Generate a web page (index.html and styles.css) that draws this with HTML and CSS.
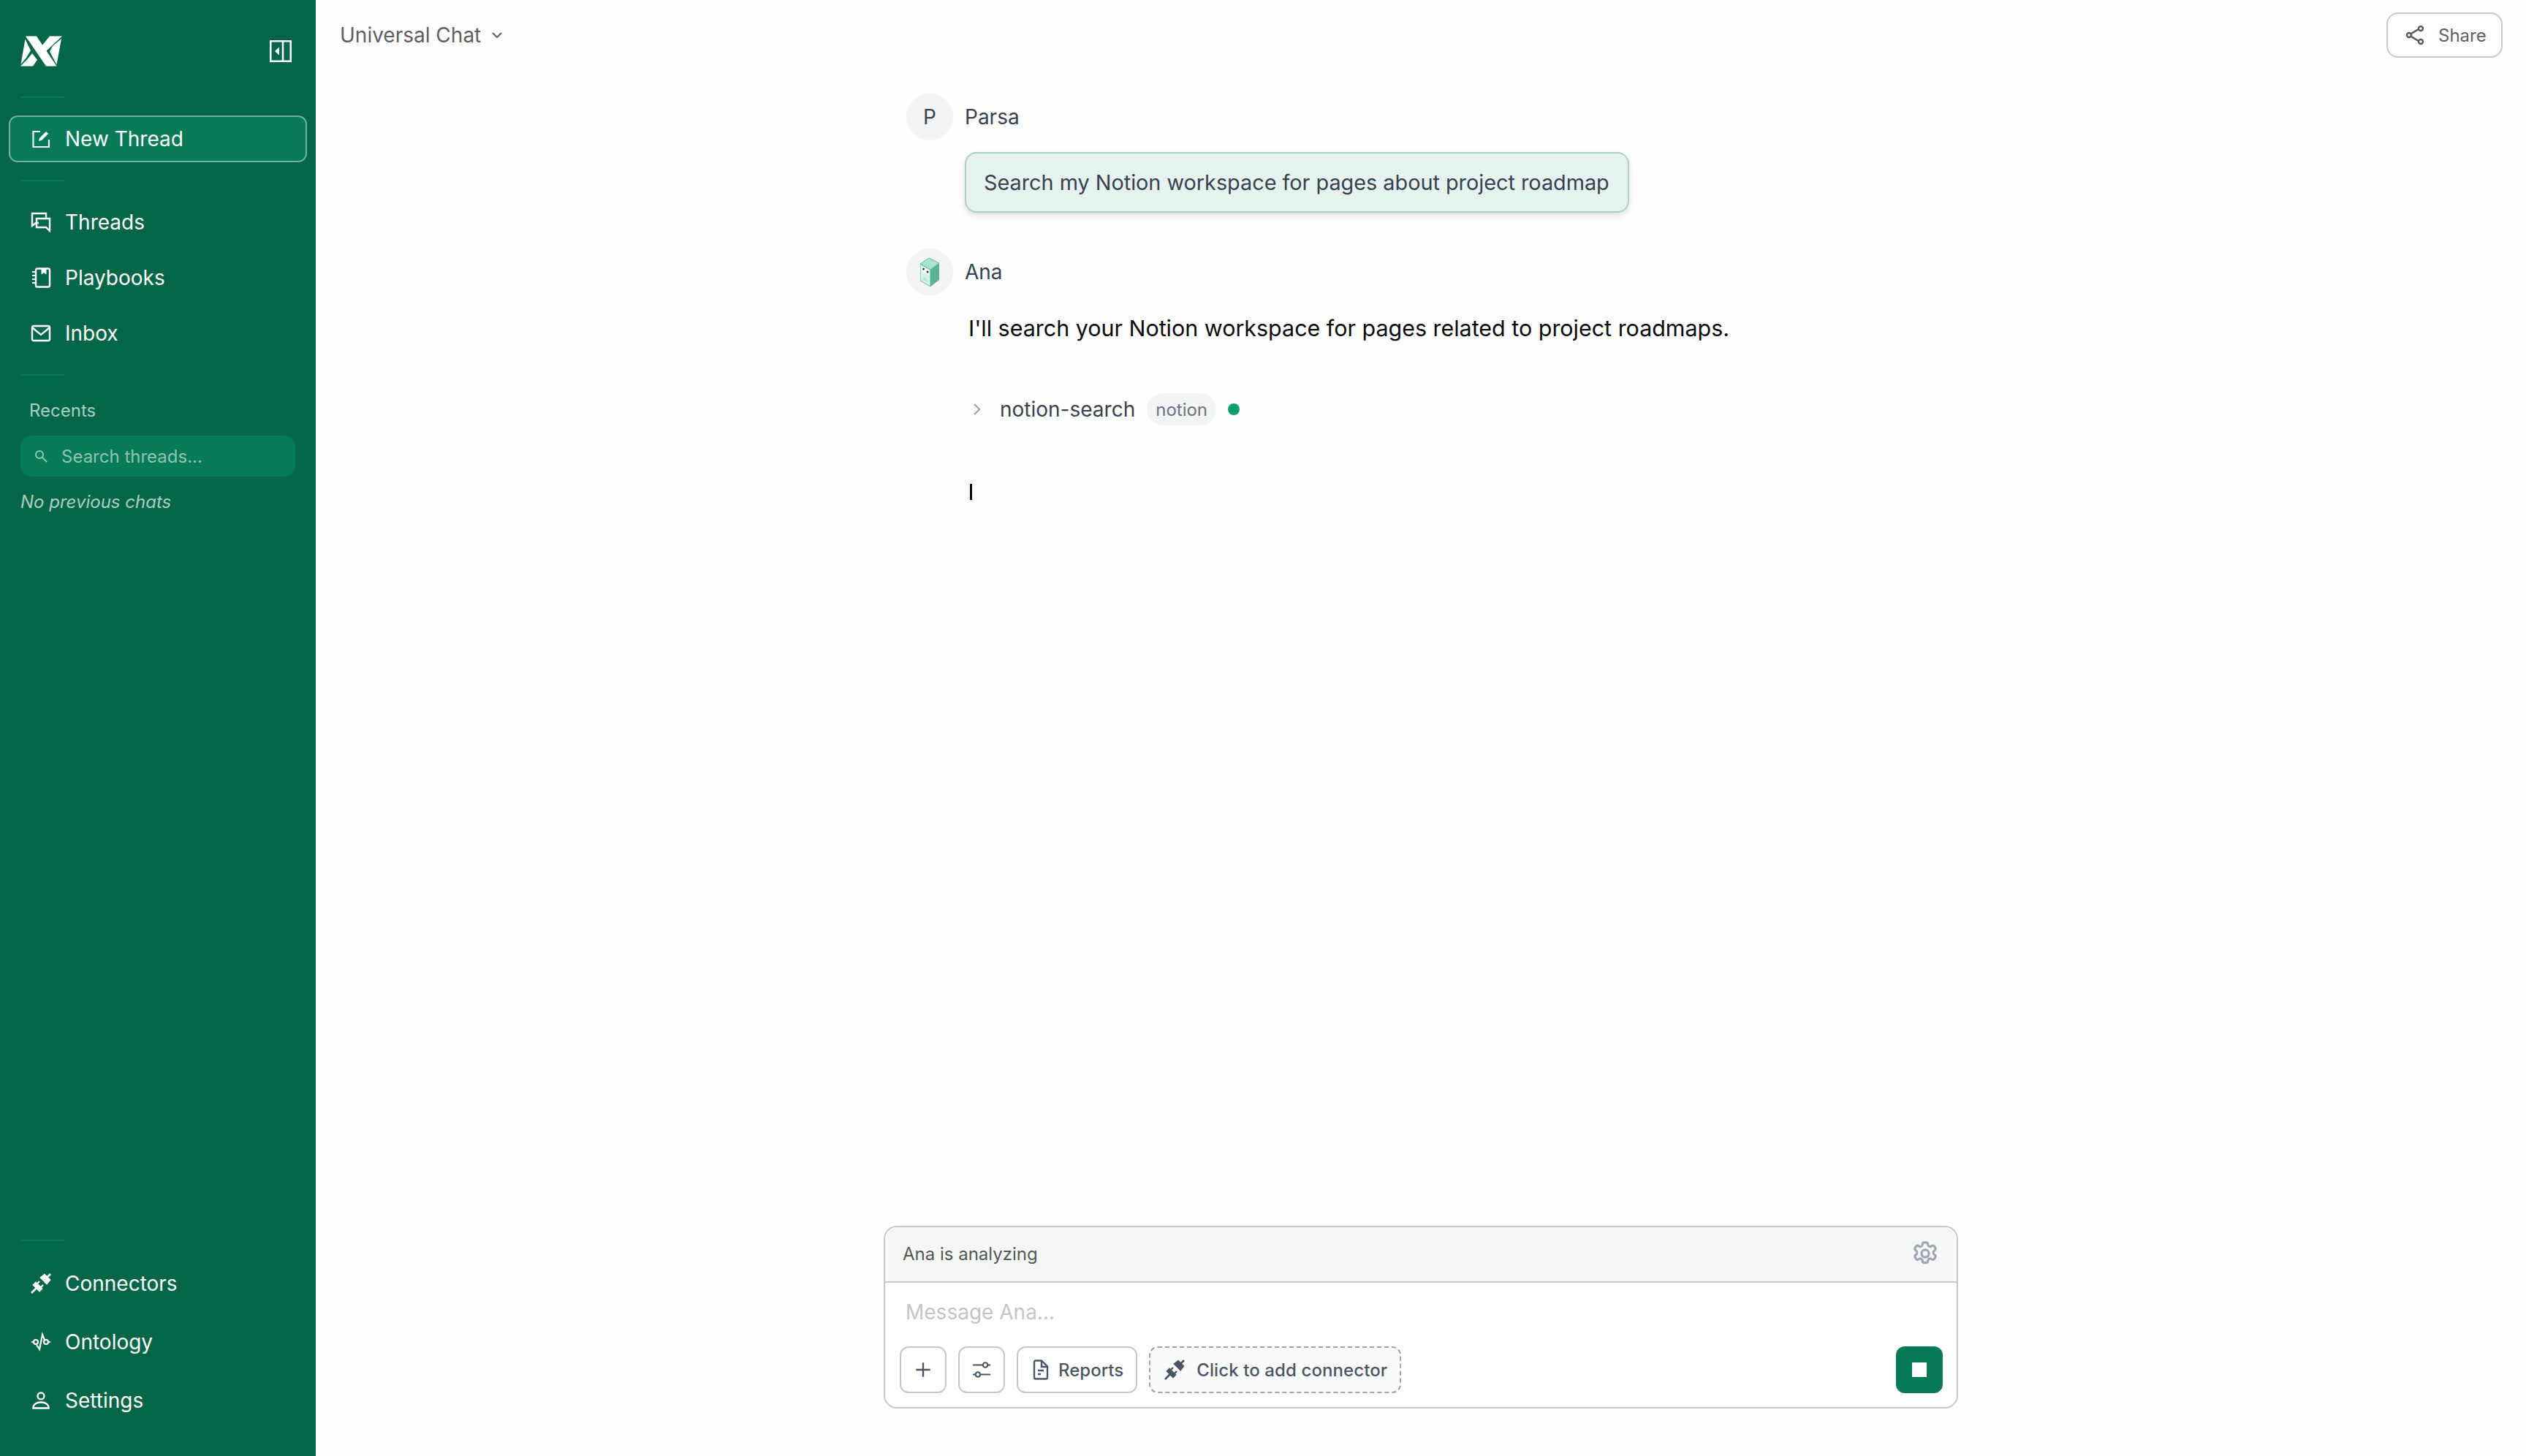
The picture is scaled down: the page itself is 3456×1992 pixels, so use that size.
FILE: index.html
```html
<!DOCTYPE html>
<html lang="en">

<head>
  <meta charset="utf-8">
  <title>Universal Chat</title>
  <link rel="stylesheet" href="styles.css">
</head>

<body>
  <aside class="sidebar">
    <div class="brand">
      <svg class="logo" viewBox="28 49 58 42" fill="#fff">
        <polygon points="35,49.500 50,49.500 77.500,90.500 63,90.500" />
        <polygon points="34.500,53.500 42,69 36,79 28.500,88" />
        <polygon points="28,90.500 37,81.500 44,73 51,82 45,90.500" />
        <polygon points="57,63 68,49.500 85,49.500 62,71" />
        <polygon points="84,53 77.500,88.500 68,70.500 72,63" />
      </svg>
      <svg class="toggle" viewBox="0 0 30 30" fill="none" stroke="#fff" stroke-width="2.500">
        <rect x="1.250" y="1.250" width="27.500" height="27.500" />
        <path d="M18 1v28" />
        <path d="M13 9.500v11l-6-5.500z" fill="#fff" stroke="none" />
      </svg>
    </div>
    <div class="rule"></div>
    <a class="new-thread">
      <svg class="icon" viewBox="0 0 24 24" fill="none" stroke="#fff" stroke-width="2.200">
        <path d="M11 2H1.500v21H23v-10" />
        <path d="M9 15l1-4 9-9 3 3-9 9z" fill="#fff" stroke="none" />
      </svg>
      New Thread
    </a>
    <div class="rule"></div>
    <nav class="nav nav-top">
      <a class="nav-row">
        <svg class="icon" viewBox="0 0 28 28" fill="none" stroke="#fff" stroke-width="2.400">
          <path d="M21 8V2H2v17l5-4h4" />
          <path d="M8 9h18v17l-5-5H8z" />
        </svg>
        Threads
      </a>
      <a class="nav-row">
        <svg class="icon" viewBox="0 0 28 28" fill="none" stroke="#fff" stroke-width="2.400">
          <rect x="7" y="1.500" width="19" height="25" rx="2" />
          <path d="M15 2v7l3-2.500 3 2.500V2" fill="#fff" stroke-width="1" />
          <path d="M2 6h5M2 11h5M2 16h5M2 21h5" stroke-width="2" />
        </svg>
        Playbooks
      </a>
      <a class="nav-row">
        <svg class="icon" viewBox="0 0 28 28" fill="none" stroke="#fff" stroke-width="2.400">
          <rect x="2" y="4" width="24" height="20" rx="2" />
          <path d="M2 6l12 10L26 6" />
        </svg>
        Inbox
      </a>
    </nav>
    <div class="rule"></div>
    <div class="recents">Recents</div>
    <div class="search">
      <svg class="search-icon" viewBox="0 0 18 18" fill="none" stroke="#8fc4b1" stroke-width="2">
        <circle cx="7" cy="7" r="5" />
        <path d="M11 11l6 6" />
      </svg>
      Search threads...
    </div>
    <div class="no-chats">No previous chats</div>
    <div class="rule rule-bottom"></div>
    <nav class="nav nav-bottom">
      <a class="nav-row">
        <svg class="icon" viewBox="0 0 28 28" fill="#fff" stroke="#fff" stroke-width="2.400">
          <path d="M1 27l7-7M27 1l-6 6" fill="none" stroke-width="2.800" />
          <path d="M4 16l8 8 3-3-8-8zM14 6l8 8 4-5-7-7z" />
          <path d="M12 11l-3 3M17 16l-3 3" />
        </svg>
        Connectors
      </a>
      <a class="nav-row">
        <svg class="icon" viewBox="0 0 28 28" fill="none" stroke="#fff" stroke-width="2.200">
          <circle cx="7" cy="14" r="3" />
          <circle cx="21" cy="14" r="3" />
          <path d="M1 14h3M24 14h3M8 18l4 6 4-20 3 7" />
        </svg>
        Ontology
      </a>
      <a class="nav-row">
        <svg class="icon" viewBox="0 0 28 28" fill="none" stroke="#fff" stroke-width="2.400">
          <circle cx="14" cy="8" r="4.500" />
          <path d="M3.500 24.500c0-5 4-8 10.500-8s10.500 3 10.500 8z" />
        </svg>
        Settings
      </a>
    </nav>
  </aside>

  <main class="main">
    <header class="topbar">
      <div class="title">
        Universal Chat
        <svg class="title-chevron" viewBox="0 0 16 10" fill="none" stroke="#5f5f5f" stroke-width="2">
          <path d="M2 2l6 6 6-6" />
        </svg>
      </div>
      <button class="share">
        <svg class="share-icon" viewBox="0 0 26 26" fill="none" stroke="#5a5a5a" stroke-width="2.400">
          <circle cx="5" cy="13" r="3" />
          <circle cx="21" cy="4" r="3" />
          <circle cx="21" cy="22" r="3" />
          <path d="M8 11l10-6M8 15l10 6" />
        </svg>
        Share
      </button>
    </header>

    <section class="thread">
      <div class="msg-head">
        <div class="avatar">P</div>
        <span>Parsa</span>
      </div>
      <div class="bubble">Search my Notion workspace for pages about project roadmap</div>

      <div class="msg-head msg-head-ana">
        <div class="avatar">
          <svg class="ana-box" viewBox="0 0 26 40">
            <polygon points="0,9 12,1 26,8 14,17" fill="#a9e3d0" stroke="#5fbd9f" />
            <polygon points="0,9 14,17 14,40 0,32" fill="#d5f2e8" stroke="#5fbd9f" />
            <polygon points="14,17 26,8 26,31 14,40" fill="#57b394" />
            <polygon points="2,12 12,18 12,25 2,19" fill="#fff" />
            <circle cx="4.500" cy="16" r="1.500" fill="#333" />
            <circle cx="10" cy="20" r="1.500" fill="#333" />
            <path d="M4 27l6 3v4l-6-3z" fill="#b5e6d6" />
          </svg>
        </div>
        <span>Ana</span>
      </div>
      <p class="reply">I'll search your Notion workspace for pages related to project roadmaps.</p>

      <div class="tool">
        <svg class="tool-chevron" viewBox="0 0 12 18" fill="none" stroke="#9ca3af" stroke-width="2.200">
          <path d="M2 2l7 7-7 7" />
        </svg>
        <span class="tool-name">notion-search</span>
        <span class="tool-tag">notion</span>
        <span class="tool-dot"></span>
      </div>
      <div class="cursor"></div>
    </section>

    <section class="composer">
      <div class="composer-head">
        <span>Ana is analyzing</span>
        <svg class="gear" viewBox="0 0 24 24" fill="none" stroke="#a0a5b1" stroke-width="2">
          <path d="M9.600 3.900c.1-.9.900-1.500 1.800-1.500h1.200c.9 0 1.700.6 1.800 1.500l.1.800c.1.500.5 1 1 1.200.5.200 1.100.2 1.500-.1l.7-.4c.8-.5 1.800-.3 2.300.5l.6 1c.5.8.3 1.800-.4 2.400l-.6.5c-.4.300-.6.900-.6 1.400s.2 1.100.6 1.400l.6.500c.7.600.9 1.600.4 2.400l-.6 1c-.5.800-1.500 1-2.300.5l-.7-.4c-.4-.3-1-.3-1.500-.1-.5.200-.9.700-1 1.200l-.1.800c-.1.900-.9 1.500-1.800 1.500h-1.200c-.9 0-1.700-.6-1.800-1.500l-.1-.8c-.1-.5-.5-1-1-1.200-.5-.2-1.100-.2-1.500.1l-.7.4c-.8.500-1.800.3-2.300-.5l-.6-1c-.5-.8-.3-1.800.4-2.400l.6-.5c.4-.3.6-.9.6-1.400s-.2-1.100-.6-1.400l-.6-.5c-.7-.6-.9-1.600-.4-2.400l.6-1c.5-.8 1.500-1 2.300-.5l.7.4c.4.300 1 .3 1.500.1.500-.2.900-.7 1-1.200z" />
          <circle cx="12" cy="12" r="3.200" />
        </svg>
      </div>
      <div class="placeholder">Message Ana...</div>
      <div class="actions">
        <button class="tool-btn square">
          <svg class="btn-icon" viewBox="0 0 24 24" fill="none" stroke="#4b5563" stroke-width="2.200">
            <path d="M12 3v18M3 12h18" />
          </svg>
        </button>
        <button class="tool-btn square">
          <svg class="btn-icon" viewBox="0 0 28 28" fill="none" stroke="#4b5563" stroke-width="2.400">
            <path d="M1 7h15M23 7h4M1 21h4M12 21h15" />
            <circle cx="19.500" cy="7" r="3.500" />
            <circle cx="8.500" cy="21" r="3.500" />
          </svg>
        </button>
        <button class="tool-btn">
          <svg class="doc-icon" viewBox="0 0 22 28" fill="none" stroke="#4b5563" stroke-width="2.400">
            <path d="M2 3.500c0-1 .8-2 2-2h8l8 8v15c0 1.200-.8 2-2 2H4c-1.200 0-2-.8-2-2z" />
            <path d="M12 2v8h8M7 15h8M7 20h4" />
          </svg>
          Reports
        </button>
        <button class="tool-btn dashed">
          <svg class="plug-icon" viewBox="0 0 28 28" fill="#4b5563" stroke="#4b5563" stroke-width="2.400">
            <path d="M1 27l7-7M27 1l-6 6" fill="none" stroke-width="2.800" />
            <path d="M4 16l8 8 3-3-8-8zM14 6l8 8 4-5-7-7z" />
            <path d="M12 11l-3 3M17 16l-3 3" />
          </svg>
          Click to add connector
        </button>
        <button class="stop"><span class="stop-mark"></span></button>
      </div>
    </section>
  </main>
</body>

</html>
```

FILE: styles.css
```css
* {
  box-sizing: border-box;
}

html,
body {
  margin: 0;
  height: 100%;
}

body {
  display: flex;
  font-family: Inter, "Noto Sans", sans-serif;
  background-color: #fefefe;
  color: #374151;
}

button {
  font-family: inherit;
}

/* sidebar */
.sidebar {
  display: flex;
  flex-direction: column;
  flex: none;
  width: 432px;
  height: 1992px;
  padding: 49px 12px 36px;
  background-color: #046648;
  color: #fff;
}

.brand {
  display: flex;
  align-items: center;
  justify-content: space-between;
  padding: 0 21px 0 16px;
  height: 42px;
}

.logo {
  width: 58px;
  height: 42px;
}

.toggle {
  width: 30px;
  height: 30px;
}

.rule {
  flex: none;
  width: 60px;
  height: 2px;
  margin: 41px 0 0 16px;
  background-color: #067a58;
}

.new-thread {
  display: flex;
  align-items: center;
  gap: 21px;
  height: 64px;
  margin: 24px 0;
  padding-left: 30px;
  border: 2px solid rgba(255, 255, 255, 0.42);
  border-radius: 12px;
  background-color: #077a58;
  font-size: 28px;
}

.new-thread .icon {
  width: 24px;
  height: 24px;
}

.new-thread + .rule {
  margin-top: 0;
}

.nav-top {
  margin: 18px 0;
}

.nav-top + .rule {
  margin-top: 0;
}

.nav-row {
  display: flex;
  align-items: center;
  gap: 19px;
  height: 76px;
  padding-left: 30px;
  font-size: 28px;
}

.nav-bottom .nav-row {
  height: 80px;
}

.icon {
  flex: none;
  width: 28px;
  height: 28px;
}

.recents {
  margin: 33px 0 0 28px;
  font-size: 24px;
  line-height: 30px;
  color: #a8d0c2;
}

.search {
  display: flex;
  align-items: center;
  height: 56px;
  margin: 19px 16px 0;
  padding-left: 19px;
  border-radius: 16px;
  background-color: #077a58;
  font-size: 24px;
  color: #8fc4b1;
}

.search-icon {
  width: 18px;
  height: 18px;
  margin-right: 19px;
}

.no-chats {
  margin: 20px 0 0 16px;
  font-size: 24px;
  line-height: 30px;
  font-style: italic;
  color: #a8d0c2;
}

.rule-bottom {
  margin-top: auto;
}

.nav-bottom {
  margin-top: 18px;
}

/* main area */
.main {
  display: flex;
  flex-direction: column;
  flex: 1;
  min-width: 0;
  height: 1992px;
}

.topbar {
  display: flex;
  align-items: center;
  justify-content: space-between;
  flex: none;
  height: 96px;
  padding: 0 32px 0 33px;
}

.title {
  display: flex;
  align-items: center;
  gap: 14px;
  font-size: 28px;
  color: #5f5f5f;
}

.title-chevron {
  width: 16px;
  height: 10px;
}

.share {
  display: flex;
  align-items: center;
  gap: 19px;
  width: 159px;
  height: 62px;
  padding: 0 0 0 24px;
  border: 2px solid #c8c8c8;
  border-radius: 16px;
  background: #fff;
  font-size: 24px;
  color: #5f5f5f;
}

.share-icon {
  width: 26px;
  height: 26px;
}

.thread {
  flex: 1;
  width: 1408px;
  margin: 32px auto 0;
}

.msg-head {
  display: flex;
  align-items: center;
  gap: 16px;
  font-size: 28px;
}

.msg-head-ana {
  margin-top: 49px;
}

.avatar {
  display: flex;
  align-items: center;
  justify-content: center;
  width: 64px;
  height: 64px;
  border-radius: 50%;
  background-color: #f3f4f6;
}

.ana-box {
  width: 26px;
  height: 40px;
}

.bubble {
  display: inline-flex;
  align-items: center;
  height: 83px;
  margin: 16px 0 0 80px;
  padding: 0 25px 0 24px;
  border: 2px solid #acd4c6;
  border-radius: 16px;
  background-color: #e6f2ee;
  box-shadow: 0 4px 8px rgba(0, 0, 0, 0.12);
  font-size: 28.8px;
}

.reply {
  margin: 21px 0 0 85px;
  font-size: 30.45px;
  line-height: 48px;
  color: #0a0a0a;
}

.tool {
  display: flex;
  align-items: center;
  height: 44px;
  margin: 65px 0 0 91px;
}

.tool-chevron {
  width: 12px;
  height: 18px;
  margin-right: 25px;
}

.tool-name {
  font-size: 28px;
}

.tool-tag {
  display: flex;
  align-items: center;
  height: 44px;
  margin: 0 16px;
  padding: 0 12px;
  border-radius: 22px;
  background-color: #f3f4f6;
  font-size: 24px;
  color: #6b7280;
}

.tool-dot {
  width: 16px;
  height: 16px;
  border-radius: 50%;
  background-color: #10a070;
}

.cursor {
  width: 3px;
  height: 22px;
  margin: 80px 0 0 87px;
  background-color: #0a0a0a;
}

/* composer */
.composer {
  flex: none;
  width: 1470px;
  height: 250px;
  margin: 0 auto 65px;
  border: 2px solid #c8c8c8;
  border-radius: 18px;
  overflow: hidden;
  background-color: #fff;
}

.composer-head {
  display: flex;
  align-items: center;
  justify-content: space-between;
  height: 76px;
  padding: 0 24px 2px 24px;
  border-bottom: 2px solid #c8c8c8;
  background-color: #f5f7f6;
  font-size: 24px;
  color: #555;
}

.gear {
  width: 38px;
  height: 38px;
}

.placeholder {
  height: 87px;
  padding: 22px 0 0 28px;
  font-size: 28px;
  line-height: 36px;
  color: #c4c4c4;
}

.actions {
  display: flex;
  gap: 16px;
  padding: 0 19px 0 20px;
}

.tool-btn {
  display: flex;
  align-items: center;
  gap: 13px;
  height: 64px;
  padding: 0 17px 0 20px;
  border: 2px solid #c8c8c8;
  border-radius: 12px;
  background: #fff;
  font-size: 24px;
  font-weight: 500;
  color: #4b5563;
}

.square {
  justify-content: center;
  width: 64px;
  padding: 0;
}

.btn-icon {
  width: 26px;
  height: 26px;
}

.doc-icon {
  width: 22px;
  height: 28px;
}

.dashed {
  gap: 16px;
  padding-left: 19px;
  letter-spacing: 0.1px;
  border: 2px dashed #9ca3af;
  background-color: #f9fafb;
}

.plug-icon {
  width: 28px;
  height: 28px;
}

.stop {
  display: flex;
  align-items: center;
  justify-content: center;
  width: 64px;
  height: 64px;
  margin-left: auto;
  padding: 0;
  border: 0;
  border-radius: 12px;
  background-color: #077a58;
}

.stop-mark {
  width: 20px;
  height: 20px;
  background-color: #fff;
}
```
